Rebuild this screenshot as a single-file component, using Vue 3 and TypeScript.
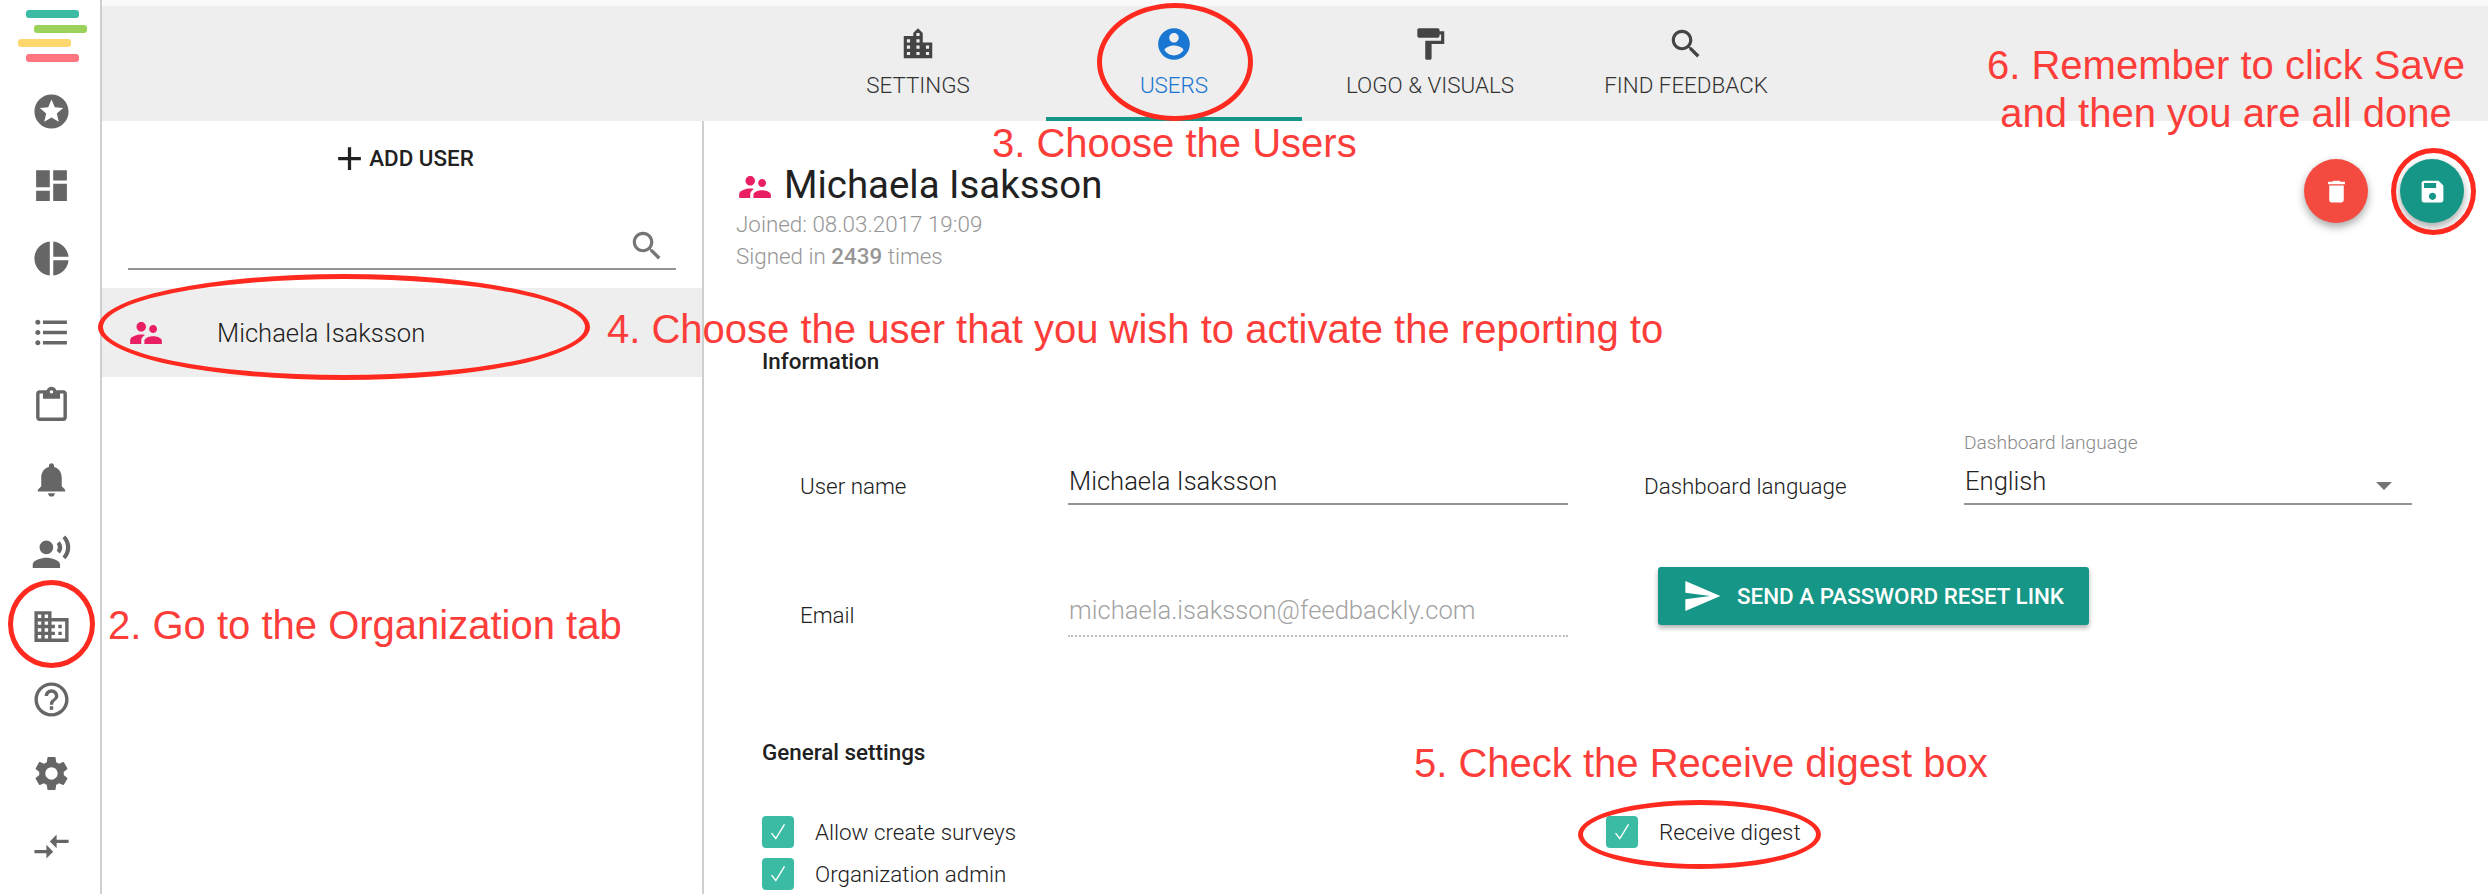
<script setup lang="ts">
interface NavIcon { name: string; d: string }
const navIcons: NavIcon[] = [
  { name: 'stars', d: 'M11.99 2C6.47 2 2 6.48 2 12s4.47 10 9.99 10C17.52 22 22 17.52 22 12S17.52 2 11.99 2zm4.24 16L12 15.45 7.77 18l1.12-4.81-3.73-3.23 4.92-.42L12 5l1.92 4.53 4.92.42-3.73 3.23L16.23 18z' },
  { name: 'dashboard', d: 'M3 13h8V3H3v10zm0 8h8v-6H3v6zm10 0h8V11h-8v10zm0-18v6h8V3h-8z' },
  { name: 'pie', d: 'M11 2v20c-5.07-.5-9-4.79-9-10s3.93-9.5 9-10zm2.03 0v8.99H22c-.47-4.74-4.24-8.52-8.97-8.99zm0 11.01V22c4.74-.47 8.5-4.25 8.97-8.99h-8.97z' },
  { name: 'list', d: 'M4 10.5c-.83 0-1.5.67-1.5 1.5s.67 1.5 1.5 1.5 1.5-.67 1.5-1.5-.67-1.5-1.5-1.5zm0-6c-.83 0-1.5.67-1.5 1.5S3.17 7.5 4 7.5 5.5 6.83 5.5 6 4.83 4.5 4 4.5zm0 12c-.83 0-1.5.68-1.5 1.5s.68 1.5 1.5 1.5 1.5-.68 1.5-1.5-.67-1.5-1.5-1.5zM7 19h14v-2H7v2zm0-6h14v-2H7v2zm0-8v2h14V5H7z' },
  { name: 'clipboard', d: 'M19 3h-4.18C14.4 1.84 13.3 1 12 1c-1.3 0-2.4.84-2.82 2H5c-1.1 0-2 .9-2 2v14c0 1.1.9 2 2 2h14c1.1 0 2-.9 2-2V5c0-1.1-.9-2-2-2zm-7 0c.55 0 1 .45 1 1s-.45 1-1 1-1-.45-1-1 .45-1 1-1zm7 16H5V5h2v3h10V5h2v14z' },
  { name: 'bell', d: 'M12 22c1.1 0 2-.9 2-2h-4c0 1.1.89 2 2 2zm6-6v-5c0-3.07-1.64-5.64-4.5-6.32V4c0-.83-.67-1.5-1.5-1.5s-1.5.67-1.5 1.5v.68C7.63 5.36 6 7.92 6 11v5l-2 2v1h16v-1l-2-2z' },
  { name: 'voice', d: 'M9 5a4 4 0 1 0 0 8 4 4 0 0 0 0-8zM9 15c-2.67 0-8 1.34-8 4v2h16v-2c0-2.66-5.33-4-8-4zm7.76-9.64l-1.68 1.69c.84 1.18.84 2.71 0 3.89l1.68 1.69c2.02-2.02 2.02-5.07 0-7.27zM20.07 2l-1.63 1.63c2.77 3.02 2.77 7.56 0 10.74L20.07 16c3.9-3.89 3.91-9.95 0-14z' },
  { name: 'domain', d: 'M12 7V3H2v18h20V7H12zM6 19H4v-2h2v2zm0-4H4v-2h2v2zm0-4H4V9h2v2zm0-4H4V5h2v2zm4 12H8v-2h2v2zm0-4H8v-2h2v2zm0-4H8V9h2v2zm0-4H8V5h2v2zm10 12h-8v-2h2v-2h-2v-2h2v-2h-2V9h8v10zm-2-8h-2v2h2v-2zm0 4h-2v2h2v-2z' },
  { name: 'help', d: 'M11 18h2v-2h-2v2zm1-16C6.48 2 2 6.48 2 12s4.48 10 10 10 10-4.48 10-10S17.52 2 12 2zm0 18c-4.41 0-8-3.59-8-8s3.59-8 8-8 8 3.59 8 8-3.59 8-8 8zm0-14c-2.21 0-4 1.79-4 4h2c0-1.1.9-2 2-2s2 .9 2 2c0 2-3 1.75-3 5h2c0-2.25 3-2.5 3-5 0-2.21-1.79-4-4-4z' },
  { name: 'settings', d: 'M19.14 12.94c.04-.3.06-.61.06-.94 0-.32-.02-.64-.07-.94l2.03-1.58c.18-.14.23-.41.12-.61l-1.92-3.32c-.12-.22-.37-.29-.59-.22l-2.39.96c-.5-.38-1.03-.7-1.62-.94l-.36-2.54c-.04-.24-.24-.41-.48-.41h-3.84c-.24 0-.43.17-.47.41l-.36 2.54c-.59.24-1.13.57-1.62.94l-2.39-.96c-.22-.08-.47 0-.59.22L2.74 8.87c-.12.21-.08.47.12.61l2.03 1.58c-.05.3-.09.63-.09.94s.02.64.07.94l-2.03 1.58c-.18.14-.23.41-.12.61l1.92 3.32c.12.22.37.29.59.22l2.39-.96c.5.38 1.03.7 1.62.94l.36 2.54c.05.24.24.41.48.41h3.84c.24 0 .44-.17.47-.41l.36-2.54c.59-.24 1.13-.56 1.62-.94l2.39.96c.22.08.47 0 .59-.22l1.92-3.32c.12-.22.07-.47-.12-.61l-2.01-1.58zM12 15.6c-1.98 0-3.6-1.62-3.6-3.6s1.62-3.6 3.6-3.6 3.6 1.62 3.6 3.6-1.62 3.6-3.6 3.6z' },
  { name: 'compare', d: 'M9.01 14H2v2h7.01v3L13 15l-3.99-4v3zm5.98-1v-3H22V8h-7.01V5L11 9l3.99 4z' },
]
interface Tab { label: string; d: string; active?: boolean }
const tabs: Tab[] = [
  { label: 'SETTINGS', d: 'M15 11V5l-3-3-3 3v2H3v14h18V11h-6zm-8 8H5v-2h2v2zm0-4H5v-2h2v2zm0-4H5V9h2v2zm6 8h-2v-2h2v2zm0-4h-2v-2h2v2zm0-4h-2V9h2v2zm0-4h-2V5h2v2zm6 12h-2v-2h2v2zm0-4h-2v-2h2v2z' },
  { label: 'USERS', active: true, d: 'M12 2C6.48 2 2 6.48 2 12s4.48 10 10 10 10-4.48 10-10S17.52 2 12 2zm0 3c1.66 0 3 1.34 3 3s-1.34 3-3 3-3-1.34-3-3 1.34-3 3-3zm0 14.2c-2.5 0-4.71-1.28-6-3.22.03-1.99 4-3.08 6-3.08 1.99 0 5.97 1.09 6 3.08-1.29 1.94-3.5 3.22-6 3.22z' },
  { label: 'LOGO & VISUALS', d: 'M18 4V3c0-.55-.45-1-1-1H5c-.55 0-1 .45-1 1v4c0 .55.45 1 1 1h12c.55 0 1-.45 1-1V6h1v4H9v11c0 .55.45 1 1 1h2c.55 0 1-.45 1-1v-9h8V4h-3z' },
  { label: 'FIND FEEDBACK', d: 'M15.5 14h-.79l-.28-.27C15.41 12.59 16 11.11 16 9.5 16 5.91 13.09 3 9.5 3S3 5.91 3 9.5 5.91 16 9.5 16c1.61 0 3.09-.59 4.23-1.57l.27.28v.79l5 4.99L20.49 19l-4.99-5zm-6 0C7.01 14 5 11.99 5 9.5S7.01 5 9.5 5 14 7.01 14 9.5 11.99 14 9.5 14z' },
]
const searchPath = tabs[3].d
const peoplePath = 'M16.5 12c1.38 0 2.49-1.12 2.49-2.5S17.88 7 16.5 7C15.12 7 14 8.12 14 9.5s1.12 2.5 2.5 2.5zM9 11c1.66 0 2.99-1.34 2.99-3S10.66 5 9 5C7.34 5 6 6.34 6 8s1.34 3 3 3zm7.5 3c-1.83 0-5.5.92-5.5 2.75V19h11v-2.25c0-1.83-3.67-2.75-5.5-2.75zM9 13c-2.33 0-7 1.17-7 3.5V19h7v-2.25c0-.85.33-2.34 2.37-3.47C10.5 13.1 9.66 13 9 13z'
const leftChecks: string[] = ['Allow create surveys', 'Organization admin']
</script>

<template>
  <div class="app">
    <aside class="rail">
      <div class="logo">
        <span class="bar teal"></span>
        <span class="bar green"></span>
        <span class="bar yellow"></span>
        <span class="bar pink"></span>
      </div>
      <nav class="rail-nav">
        <svg v-for="icon in navIcons" :key="icon.name" class="rail-icon" viewBox="0 0 24 24"><path :d="icon.d" /></svg>
      </nav>
    </aside>

    <main class="main">
      <div class="tabs">
        <div v-for="tab in tabs" :key="tab.label" class="tab" :class="{ active: tab.active }">
          <svg class="tab-icon" viewBox="0 0 24 24"><path :d="tab.d" /></svg>
          <span>{{ tab.label }}</span>
        </div>
      </div>

      <div class="body">
        <section class="list">
          <div class="add-user">
            <svg class="add-icon" viewBox="0 0 24 24"><path d="M19 13h-6v6h-2v-6H5v-2h6V5h2v6h6v2z" /></svg>
            <span>ADD USER</span>
          </div>
          <div class="search">
            <svg class="search-icon" viewBox="0 0 24 24"><path :d="searchPath" /></svg>
          </div>
          <div class="user-row">
            <svg class="people small" viewBox="0 0 24 24"><path :d="peoplePath" /></svg>
            <span>Michaela Isaksson</span>
          </div>
        </section>

        <section class="detail">
          <header class="detail-head">
            <div class="who">
              <h1 class="name">
                <svg class="people" viewBox="0 0 24 24"><path :d="peoplePath" /></svg>
                Michaela Isaksson
              </h1>
              <p class="meta first">Joined: 08.03.2017 19:09</p>
              <p class="meta">Signed in <b>2439</b> times</p>
            </div>
            <div class="fabs">
              <button class="fab red" type="button"><svg viewBox="0 0 24 24"><path d="M6 19c0 1.1.9 2 2 2h8c1.1 0 2-.9 2-2V7H6v12zM19 4h-3.5l-1-1h-5l-1 1H5v2h14V4z" /></svg></button>
              <button class="fab green" type="button"><svg viewBox="0 0 24 24"><path d="M17 3H5c-1.11 0-2 .9-2 2v14c0 1.1.89 2 2 2h14c1.1 0 2-.9 2-2V7l-4-4zm-5 16c-1.66 0-3-1.34-3-3s1.34-3 3-3 3 1.34 3 3-1.34 3-3 3zm3-10H5V5h10v4z" /></svg></button>
            </div>
          </header>

          <h2 class="section-title info">Information</h2>
          <div class="form">
            <span class="label">User name</span>
            <div class="field">Michaela Isaksson</div>
            <span class="label lang">Dashboard language</span>
            <div class="field select">
              <small>Dashboard language</small>
              English
              <i class="caret"></i>
            </div>
            <span class="label email-label">Email</span>
            <div class="field disabled">michaela.isaksson@feedbackly.com</div>
            <button class="reset" type="button">
              <svg viewBox="0 0 24 24"><path d="M2.01 21L23 12 2.01 3 2 10l15 2-15 2z" /></svg>
              SEND A PASSWORD RESET LINK
            </button>
          </div>

          <h2 class="section-title general">General settings</h2>
          <div class="checks">
            <div class="check-col">
              <label v-for="c in leftChecks" :key="c" class="check">
                <span class="box"><svg viewBox="0 0 24 24"><path d="M6 13l4 5 8-13" /></svg></span>{{ c }}
              </label>
            </div>
            <div class="check-col">
              <label class="check">
                <span class="box"><svg viewBox="0 0 24 24"><path d="M6 13l4 5 8-13" /></svg></span>Receive digest
              </label>
            </div>
          </div>
        </section>
      </div>
    </main>

    <div class="note n2">2. Go to the Organization tab</div>
    <div class="note n3">3. Choose the Users</div>
    <div class="note n4">4. Choose the user that you wish to activate the reporting to</div>
    <div class="note n5">5. Check the Receive digest box</div>
    <div class="note n6">6. Remember to click Save<br />and then you are all done</div>

    <span class="ring r-org"></span>
    <span class="ring r-users"></span>
    <span class="ring r-row"></span>
    <span class="ring r-save"></span>
    <span class="ring r-digest"></span>
  </div>
</template>

<style>
html, body { margin: 0; background: #fff; }
</style>

<style scoped>
.app {
  position: relative;
  display: flex;
  width: 2488px;
  height: 894px;
  overflow: hidden;
  background: #fff;
  font-family: Roboto, "Liberation Sans", sans-serif;
  color: #212121;
}

/* rail */
.rail {
  flex: none;
  box-sizing: border-box;
  width: 102px;
  border-right: 2px solid #cfcfcf;
  display: flex;
  flex-direction: column;
}
.logo {
  height: 76px;
  display: flex;
  flex-direction: column;
  padding-top: 10px;
  box-sizing: border-box;
}
.bar { display: block; height: 8px; width: 53px; border-radius: 3px; margin-bottom: 6.5px; }
.bar.teal { background: #3bbba4; margin-left: 26px; }
.bar.green { background: #9bd25a; margin-left: 34px; }
.bar.yellow { background: #ffd76e; margin-left: 18px; }
.bar.pink { background: #ff7680; margin-left: 26px; }
.rail-nav {
  display: flex;
  flex-direction: column;
  align-items: center;
  padding-top: 15px;
  gap: 32.5px;
}
.rail-icon { width: 41px; height: 41px; fill: #666; display: block; margin-left: 3px; }

/* main */
.main { flex: 1; min-width: 0; display: flex; flex-direction: column; border-top: 6px solid #fafafa; }
.tabs {
  height: 115px;
  flex: none;
  background: #eee;
  display: flex;
  justify-content: center;
  padding-left: 14px;
  box-sizing: border-box;
}
.tab {
  width: 256px;
  height: 115px;
  box-sizing: border-box;
  display: flex;
  flex-direction: column;
  align-items: center;
  padding-top: 19px;
  font-size: 22.4px;
  font-weight: 300;
  color: #333;
}
.tab-icon { width: 38px; height: 38px; fill: #444; margin-bottom: 9px; }
.tab.active { color: #1976d2; border-bottom: 4px solid #169686; }
.tab.active .tab-icon { fill: #1976d2; }

.body { flex: 1; display: flex; min-height: 0; }
.list { flex: none; box-sizing: border-box; width: 602px; border-right: 2px solid #cfcfcf; }
.add-user {
  display: flex;
  justify-content: center;
  align-items: center;
  height: 38px;
  margin-top: 18px;
  font-size: 22.4px;
  font-weight: 500;
}
.add-icon { width: 39px; height: 39px; fill: #212121; margin-right: 0; }
.search {
  margin: 53px 26px 0;
  height: 38px;
  border-bottom: 2px solid #949494;
  display: flex;
  justify-content: flex-end;
}
.search-icon { width: 38px; height: 38px; fill: #757575; margin-right: 10px; margin-top: -3px; }
.user-row {
  margin-top: 18px;
  height: 89px;
  background: #eee;
  display: flex;
  align-items: center;
  font-size: 25.6px;
  font-weight: 300;
}
.people { width: 38px; height: 38px; fill: #e91e63; flex: none; }
.people.small { margin: 0 52px 0 25px; }

.detail { flex: 1; min-width: 0; }
.detail-head { display: flex; justify-content: space-between; padding: 38px 24px 0 32px; }
.name {
  margin: 0;
  display: flex;
  align-items: center;
  gap: 10px;
  font-size: 38.4px;
  font-weight: 400;
  line-height: 46px;
  color: #212121;
  padding-top: 3px;
}
.name .people { margin-top: 4px; }
.meta { margin: 0; font-size: 22.4px; font-weight: 300; line-height: 32px; color: #969696; }
.meta b { font-weight: 500; }
.fabs { display: flex; gap: 32px; }
.fab {
  width: 64px;
  height: 64px;
  border: 0;
  border-radius: 50%;
  padding: 0;
  display: flex;
  align-items: center;
  justify-content: center;
  box-shadow: 0 4px 8px rgba(0, 0, 0, 0.35);
}
.fab svg { width: 29px; height: 29px; fill: #fff; }
.fab.red { background: #f44a40; }
.fab.green { background: #169686; }

.section-title { margin: 0 0 0 58px; font-size: 22.4px; font-weight: 500; line-height: 24px; color: #212121; }
.section-title.info { margin-top: 77px; }
.form {
  margin: 87px 0 0 96px;
  display: grid;
  grid-template-columns: 268px 500px 76px 320px 448px;
  grid-template-rows: 60px 60px;
  row-gap: 72px;
  align-items: end;
  font-size: 22.4px;
  font-weight: 300;
}
.label { padding-bottom: 19px; line-height: 30px; }
.label.lang { grid-column: 4; }
.label.email-label { grid-column: 1; padding-bottom: 22px; }
.field {
  box-sizing: border-box;
  position: relative;
  height: 40px;
  line-height: 33px;
  font-size: 25.6px;
  border-bottom: 2px solid #949494;
  padding-left: 1px;
  margin-bottom: 15px;
}
.field.disabled { height: 46px; line-height: 38px; color: #a3a3a3; border-bottom: 2px dotted #bdbdbd; }
.select small {
  position: absolute;
  left: 0;
  top: -34px;
  line-height: 24px;
  font-size: 19.2px;
  color: #8a8a8a;
}
.caret {
  position: absolute;
  right: 20px;
  top: 17px;
  width: 0;
  height: 0;
  border-left: 8px solid transparent;
  border-right: 8px solid transparent;
  border-top: 8px solid #757575;
}
.reset {
  grid-column: 4 / 6;
  justify-self: start;
  align-self: start;
  margin: -25px 0 0 14px;
  box-sizing: border-box;
  width: 431px;
  height: 58px;
  border: 0;
  border-radius: 3px;
  background: #169686;
  color: #fff;
  font-family: inherit;
  font-size: 22.4px;
  font-weight: 500;
  display: flex;
  align-items: center;
  padding: 0 0 0 24px;
  gap: 15px;
  white-space: nowrap;
  box-shadow: 0 3px 5px rgba(0, 0, 0, 0.3);
}
.reset svg { width: 40px; height: 40px; fill: #fff; flex: none; }

.section-title.general { margin-top: 88px; }
.checks { display: flex; margin: 52px 0 0 58px; }
.check-col { width: 844px; display: flex; flex-direction: column; gap: 10px; }
.check { display: flex; align-items: center; height: 32px; font-size: 22.4px; font-weight: 300; }
.box {
  width: 32px;
  height: 32px;
  border-radius: 4px;
  background: #3bbba4;
  margin-right: 21px;
  flex: none;
  display: flex;
  align-items: center;
  justify-content: center;
}
.box svg { width: 26px; height: 26px; fill: none; stroke: #fff; stroke-width: 1.3; }

/* annotations that lie over the UI */
.note {
  position: absolute;
  font-family: "Liberation Sans", Arial, sans-serif;
  font-size: 40px;
  line-height: 40px;
  color: #fc3d39;
  white-space: nowrap;
}
.n2 { left: 108px; top: 605px; }
.n3 { left: 992px; top: 123px; }
.n4 { left: 607px; top: 309px; }
.n5 { left: 1414px; top: 743px; }
.n6 { left: 1987px; top: 41px; line-height: 48px; text-align: center; }
.ring {
  position: absolute;
  box-sizing: border-box;
  border: 5px solid #ff2a1f;
  border-radius: 50%;
}
.r-org { left: 8px; top: 580px; width: 87px; height: 88px; }
.r-users { left: 1097px; top: 3px; width: 156px; height: 118px; }
.r-row { left: 98px; top: 274px; width: 492px; height: 106px; }
.r-save { left: 2391px; top: 148px; width: 85px; height: 87px; }
.r-digest { left: 1578px; top: 800px; width: 243px; height: 69px; }
</style>
